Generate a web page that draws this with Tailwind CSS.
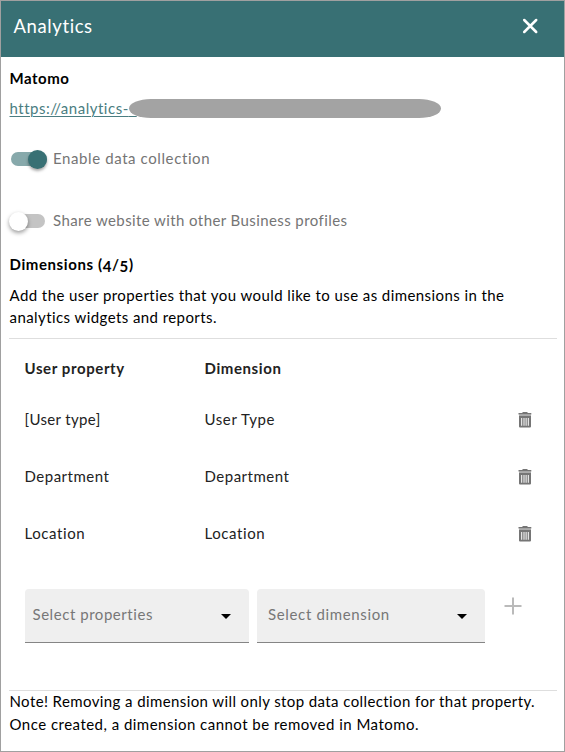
<!DOCTYPE html>
<html lang="en">
<head>
<meta charset="utf-8">
<title>Analytics</title>
<script src="https://cdn.jsdelivr.net/npm/@tailwindcss/browser@4"></script>
</head>
<body class="bg-white">
<svg class="hidden">
  <symbol id="trash" viewBox="0 0 14 16"><path fill="currentColor" d="M4.5 0h5v1h3.8v1.5H.5V1h4z"/><path fill="currentColor" opacity=".6" d="M1 2.5h12V4H1z"/><path fill="currentColor" fill-rule="evenodd" d="M1 4h12v10.6q0 1-1 1H2q-1 0-1-1zM3.2 6v7.8h1V6zM5.5 6v7.8h1V6zM7.6 6v7.8h1V6zM9.8 6v7.8h1V6z"/></symbol>
</svg>
<main class="flex h-[752px] w-[565px] flex-col border border-[#a0a0a0] font-['Lato',sans-serif] text-[15px] leading-[22px] text-black">
  <header class="flex h-14 shrink-0 items-start justify-between bg-[#387074] pt-[14px] pr-[26px] pl-3 text-white">
    <h1 class="-mt-px pl-[0.5px] text-[18.5px] leading-6 tracking-[0.6px]">Analytics</h1>
    <button aria-label="Close" class="mt-[2.5px]"><svg class="size-4" viewBox="0 0 16 16" fill="none" stroke="currentColor" stroke-width="2.5" stroke-linecap="round"><path d="M2.2 2l12 12M14.2 2l-12 12"/></svg></button>
  </header>
  <section class="flex flex-col pr-[7px] pl-2">
    <h2 class="mt-[10px] pl-[0.5px] font-bold tracking-[0.53px]">Matomo</h2>
    <div class="relative mt-2 h-[22px] pl-[0.5px]">
      <a class="tracking-[0.51px] text-[#4a7d81] underline decoration-1 underline-offset-2">https://analytics-<span class="text-transparent">a</span></a>
      <span class="absolute top-[2px] left-[120px] h-[19px] w-[312px] rounded-[22px/9.5px] bg-[#a3a3a3]"></span>
    </div>
    <label class="mt-[29px] flex h-[22px] items-center tracking-[0.6px] text-[#757575]">
      <span class="ml-[2px] flex h-[14px] w-9 items-center justify-end rounded-full bg-[#87a9ab]"><span class="size-[19px] shrink-0 rounded-full bg-[#387074] shadow-[0_2px_3px_rgba(0,0,0,0.35)]"></span></span>
      <span class="-mt-[2px] ml-[6px]">Enable data collection</span>
    </label>
    <label class="mt-10 flex h-[22px] items-center tracking-[0.41px] text-[#757575]">
      <span class="ml-[2px] flex h-[14px] w-[34px] items-center rounded-full bg-[#c4c4c4]"><span class="-ml-[2px] size-[19px] shrink-0 rounded-full bg-white shadow-[0_2px_4px_rgba(0,0,0,0.4)]"></span></span>
      <span class="-mt-[2px] ml-2">Share website with other Business profiles</span>
    </label>
    <h2 class="mt-[21px] pl-[0.5px] font-bold tracking-[0.6px]">Dimensions (<span class="relative top-[2px]">4</span>/<span class="relative top-[2px]">5</span>)</h2>
    <p class="mt-[9px] pl-[0.5px] whitespace-nowrap tracking-[0.425px]">Add the user properties that you would like to use as dimensions in the<br>analytics widgets and reports.</p>
  </section>
  <section class="mt-[10px] mr-[7px] ml-2 flex h-[353px] shrink-0 flex-col border-y border-[#dedede] pl-[15.5px] text-[#222]">
    <div class="mt-[18px] flex h-[22px] font-bold tracking-[0.6px]"><span class="w-[180px]">User property</span><span>Dimension</span></div>
    <div class="mt-[29px] flex h-[22px] items-center"><span class="w-[180px] tracking-[0.35px]">[User type]</span><span class="flex-1 tracking-[0.6px]">User Type</span><svg class="mt-[2px] mr-[25.5px] h-4 w-[14px] text-[#757575]"><use href="#trash"/></svg></div>
    <div class="mt-[35px] flex h-[22px] items-center tracking-[0.51px]"><span class="w-[180px]">Department</span><span class="flex-1">Department</span><svg class="mt-[2px] mr-[25.5px] h-4 w-[14px] text-[#757575]"><use href="#trash"/></svg></div>
    <div class="mt-[35px] flex h-[22px] items-center tracking-[0.58px]"><span class="w-[180px]">Location</span><span class="flex-1">Location</span><svg class="mt-[2px] mr-[25.5px] h-4 w-[14px] text-[#757575]"><use href="#trash"/></svg></div>
    <div class="mt-[45px] flex text-[#777]">
      <div class="flex h-[54px] w-56 items-center justify-between rounded-t border-b border-[#858585] bg-[#efefef] pr-[18px] pl-2"><span class="-mt-[3px] tracking-[0.55px]">Select properties</span><svg class="mt-[2px] h-[5px] w-[10px]" viewBox="0 0 10 5"><path d="M0 0h10L5 5z"/></svg></div>
      <div class="ml-2 flex h-[54px] w-[228px] items-center justify-between rounded-t border-b border-[#858585] bg-[#efefef] pr-[18px] pl-[11.5px]"><span class="-mt-[3px] tracking-[0.65px]">Select dimension</span><svg class="mt-[2px] h-[5px] w-[10px]" viewBox="0 0 10 5"><path d="M0 0h10L5 5z"/></svg></div>
      <svg class="mt-[7.5px] ml-[19.5px] size-[18px]" viewBox="0 0 18 18" fill="none" stroke="#bababa" stroke-width="2"><path d="M9 0.5v17M0.5 9h17"/></svg>
    </div>
  </section>
  <p class="-mt-px pl-[8.5px] whitespace-nowrap leading-[23px] tracking-[0.4px]">Note! Removing a dimension will only stop data collection for that property.<br><span class="tracking-[0.475px]">Once created, a dimension cannot be removed in Matomo.</span></p>
</main>
</body>
</html>
